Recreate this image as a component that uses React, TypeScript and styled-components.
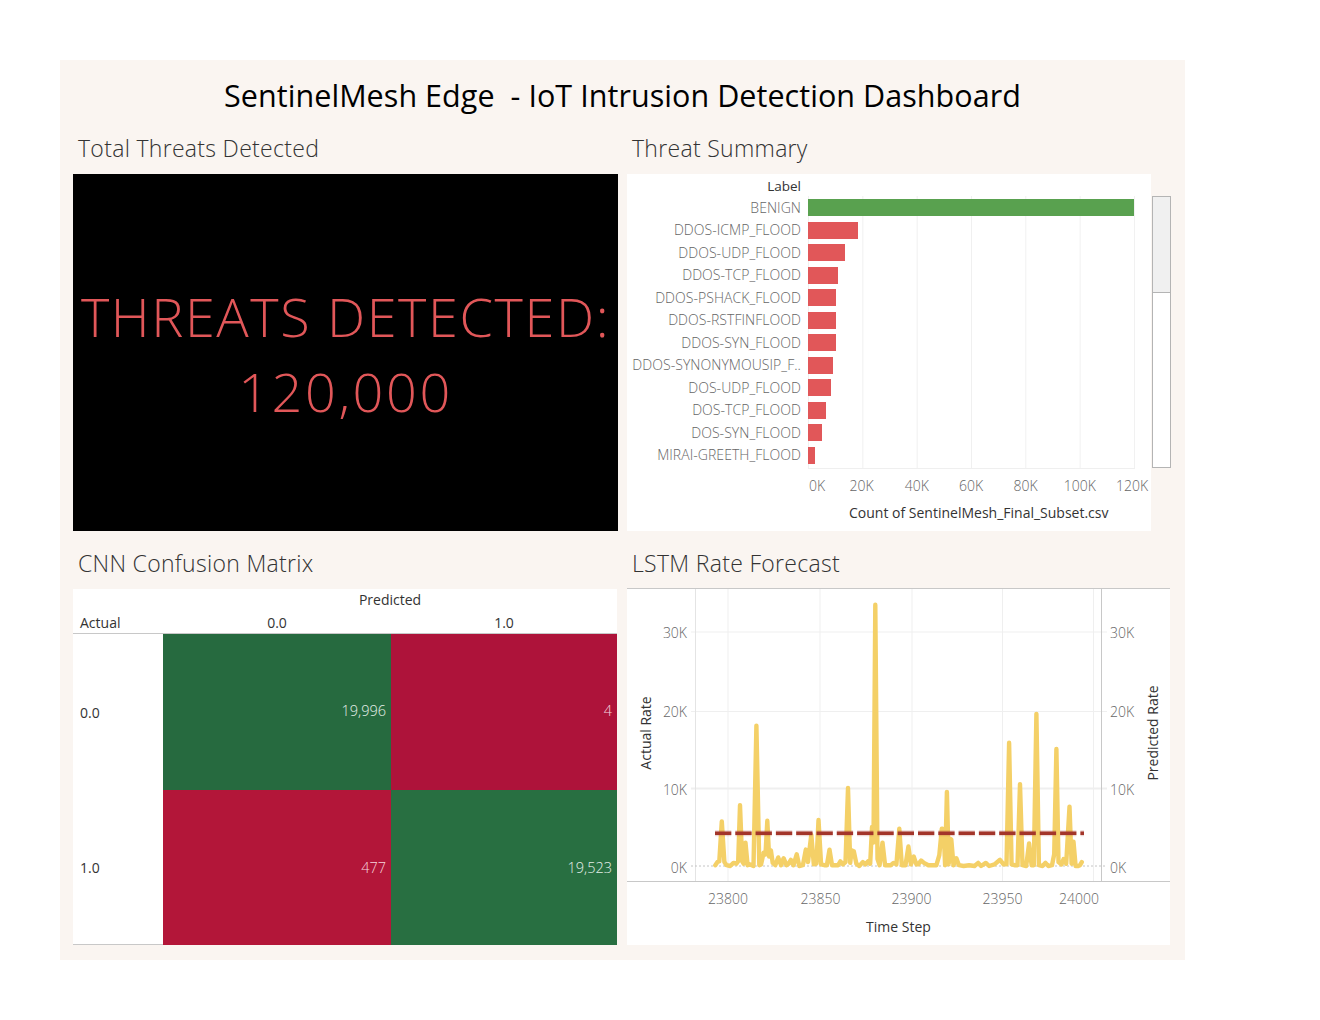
import React from "react";
import styled, { createGlobalStyle } from "styled-components";

const Global = createGlobalStyle`
  html, body { margin: 0; padding: 0; background: #fff; }
  body { font-family: "Open Sans", "Noto Sans", "Liberation Sans", sans-serif; }
`;

const Canvas = styled.div`
  box-sizing: border-box;
  width: 1125px;
  height: 900px;
  margin: 60px 0 0 60px;
  padding: 0 14px 15px 13px;
  background: #faf5f1;
  display: flex;
  flex-direction: column;
`;
const Title = styled.h1`
  height: 71px;
  margin: 0;
  padding: 0 0 0 1px;
  display: flex;
  justify-content: center;
  align-items: flex-start;
  font-size: 30.5px;
  line-height: 71px;
  font-weight: 400;
  color: #000;
  white-space: pre;
  letter-spacing: 0.05px;
`;
const Board = styled.div`
  display: grid;
  grid-template-columns: 545px 544px;
  grid-template-rows: 400px 399px;
  column-gap: 9px;
  row-gap: 15px;
`;
const Section = styled.section`
  display: flex;
  flex-direction: column;
  min-width: 0;
`;
const Heading = styled.h2`
  height: 34px;
  margin: 0 0 9px;
  padding-left: 5px;
  font-size: 23px;
  line-height: 34px;
  font-weight: 300;
  color: #333;
  letter-spacing: 0.3px;
`;
const BigPanel = styled.div`
  height: 357px;
  background: #000;
  color: #e15759;
  font-size: 54px;
  font-weight: 300;
  line-height: 75px;
  text-align: center;
  display: flex;
  flex-direction: column;
  justify-content: center;
  padding-top: 2px;
  box-sizing: border-box;
  white-space: nowrap;
`;
const BigLine = styled.div<{ $spacing: number }>`
  letter-spacing: ${(p) => p.$spacing}px;
`;

/* Threat summary */
const ThreatLayout = styled.div`
  display: flex;
  gap: 1px;
  height: 357px;
`;
const ThreatPanel = styled.div`
  width: 524px;
  background: #fff;
  position: relative;
  display: flex;
  flex-direction: column;
`;
const LabelHead = styled.div`
  height: 22px;
  width: 174px;
  text-align: right;
  font-size: 13.5px;
  line-height: 25px;
  color: #333;
`;
const BarList = styled.div`
  position: relative;
  height: 272px;
  box-sizing: border-box;
  &::before {
    content: "";
    position: absolute;
    left: 181px;
    top: 0;
    width: 327px;
    height: 100%;
    background-image: linear-gradient(to right, #f0f0f0 1px, transparent 1px);
    background-size: 54.33px 100%;
    border-bottom: 1px solid #efefef;
  }
`;
const BarRow = styled.div`
  position: relative;
  height: 22.5px;
  display: grid;
  grid-template-columns: 174px 1fr;
  column-gap: 7px;
  align-items: center;
`;
const BarLabel = styled.span`
  text-align: right;
  font-size: 14px;
  font-weight: 300;
  color: #666;
  white-space: nowrap;
  letter-spacing: 0.05px;
`;
const Bar = styled.div<{ $w: number; $good?: boolean }>`
  width: ${(p) => p.$w}px;
  height: 17px;
  margin-top: 1px;
  background: ${(p) => (p.$good ? "#59a14f" : "#e15759")};
`;
const TickRow = styled.div`
  display: flex;
  margin: 9px 0 0 154px;
  height: 18px;
`;
const Tick = styled.span<{ $nudge?: number }>`
  flex: none;
  width: 54.33px;
  text-align: center;
  font-size: 14px;
  line-height: 18px;
  font-weight: 300;
  color: #666;
  transform: translateX(${(p) => p.$nudge ?? 0}px);
`;
const AxisTitle = styled.div`
  margin: 9px 0 0 222px;
  font-size: 14px;
  line-height: 18px;
  color: #333;
  white-space: nowrap;
`;
const Scroll = styled.div`
  margin-top: 22px;
  width: 19px;
  height: 272px;
  box-sizing: border-box;
  border: 1px solid #b4b4b4;
  background: #fff;
`;
const ScrollThumb = styled.div`
  height: 95px;
  background: #f0f0f0;
  border-bottom: 1px solid #b4b4b4;
`;

/* Confusion matrix */
const Matrix = styled.div`
  width: 544px;
  height: 356px;
  background: #fff;
  display: grid;
  grid-template-columns: 90px 228px 226px;
  grid-template-rows: 22px 23px 156px 155px;
  font-size: 14px;
  color: #333;
`;
const PredictedHead = styled.div`
  grid-column: 2 / 4;
  text-align: center;
  line-height: 22px;
`;
const ColHead = styled.div<{ $left?: boolean }>`
  border-bottom: 1px solid #c8c8c8;
  line-height: 24px;
  text-align: ${(p) => (p.$left ? "left" : "center")};
  padding-left: ${(p) => (p.$left ? "7px" : "0")};
`;
const RowHead = styled.div<{ $last?: boolean }>`
  display: flex;
  align-items: center;
  padding: 0 0 0 7px;
  border-bottom: ${(p) => (p.$last ? "1px solid #c8c8c8" : "0")};
`;
const Cell = styled.div<{ $bg: string; $tint: string; $raise: number }>`
  display: flex;
  align-items: center;
  justify-content: flex-end;
  padding: 0 5px ${(p) => p.$raise}px 0;
  background: ${(p) => p.$bg};
  color: ${(p) => p.$tint};
  font-weight: 300;
  font-size: 14.5px;
`;

/* LSTM */
const Forecast = styled.div`
  width: 543px;
  height: 357px;
  margin-top: -1px;
  background: #fff;
`;
const ForecastSvg = styled.svg`
  display: block;
`;
const TickText = styled.text`
  font-size: 14px;
  font-weight: 300;
  fill: #666;
`;
const AxisText = styled.text`
  font-size: 14px;
  fill: #333;
`;

const rows: [string, number, boolean?][] = [
  ["BENIGN", 326, true],
  ["DDOS-ICMP_FLOOD", 50],
  ["DDOS-UDP_FLOOD", 37],
  ["DDOS-TCP_FLOOD", 30],
  ["DDOS-PSHACK_FLOOD", 28],
  ["DDOS-RSTFINFLOOD", 28],
  ["DDOS-SYN_FLOOD", 28],
  ["DDOS-SYNONYMOUSIP_F..", 25],
  ["DOS-UDP_FLOOD", 23],
  ["DOS-TCP_FLOOD", 18],
  ["DOS-SYN_FLOOD", 14],
  ["MIRAI-GREETH_FLOOD", 7],
];
const ticks: [string, number][] = [
  ["0K", 9],
  ["20K", -1],
  ["40K", 0],
  ["60K", 0],
  ["80K", 0],
  ["100K", 0],
  ["120K", -2],
];

/* [x in 2.75× zoom units, value in thousands] */
const series: [number, number][] = [
  [262, 0.1],[268, 0.5],[273, 0.6],[280, 5.7],[287, 0.5],[293, 0.1],[303, 0.0],[312, 0.4],[320, 0.3],[325, 0.6],
  [330, 7.8],[336, 0.6],[340, 0.3],[345, 3.0],[351, 0.1],[358, 0.2],[367, 0.0],[375, 18],[383, 0.1],[388, 0.2],
  [395, 1.7],[400, 1.5],[405, 5.8],[410, 1.2],[415, 2.0],[420, 0.4],[427, 0.1],[435, 1.1],[443, 0.1],[450, 1.0],
  [458, 0.1],[464, 0.3],[470, 0.8],[477, 0.1],[486, 1.5],[493, 0.0],[503, 0.1],[511, 2.1],[517, 0.5],[526, 4.0],
  [533, 0.2],[540, 0.3],[546, 5.9],[553, 0.2],[562, 0.1],[569, 0.1],[576, 2.1],[583, 0.1],[593, 0.1],[600, 0.1],
  [606, 0.6],[613, 0.2],[620, 0.5],[627, 10],[633, 0.4],[637, 2.0],[643, 1.9],[650, 0.3],[658, 0.0],[668, 0.5],
  [675, 0.2],[682, 0.6],[688, 0.3],[693, 5],[697, 3],[702, 33.5],[708, 0.9],[714, 0.1],[722, 3.0],[729, 0.1],
  [738, 0.1],[745, 0.1],[752, 0.4],[760, 0.2],[768, 4.8],[775, 0.1],[785, 0.1],[793, 2.5],[800, 0.2],[808, 1.2],
  [815, 0.2],[820, 0.2],[828, 0.7],[836, 0.4],[848, 0.1],[860, 0.1],[870, 0.1],[878, 1.4],[885, 4.8],[890, 4.7],
  [894, 0.1],[899, 9.5],[904, 0.2],[907, 3.5],[911, 3.4],[917, 0.1],[925, 1.0],[932, 0.1],[945, 0.0],[960, 0.1],
  [975, 0.0],[985, 0.4],[993, 0.0],[1006, 0.4],[1015, 0.0],[1030, 0.2],[1045, 0.8],[1055, 0.2],[1063, 0.2],[1070, 15.8],
  [1077, 0.2],[1085, 0.1],[1093, 0.1],[1100, 10.5],[1107, 0.1],[1117, 0.0],[1125, 2.9],[1132, 0.1],[1138, 0.1],[1145, 19.5],
  [1152, 0.1],[1162, 0.0],[1170, 0.4],[1178, 0.0],[1188, 0.1],[1194, 1.5],[1200, 15],[1206, 0.5],[1214, 0.2],[1220, 0.9],
  [1227, 0.3],[1236, 7.6],[1242, 0.3],[1247, 3.1],[1253, 0.0],[1260, 0.0],[1265, 0.1],[1270, 0.5],
];
const path = series
  .map(([z, v], i) => `${i ? "L" : "M"}${(620 + z / 2.75).toFixed(1)} ${(866 - v * 7.8).toFixed(1)}`)
  .join(" ");

const hGrid: [string, number, number][] = [
  ["30K", 632, 1],
  ["20K", 711.5, 1],
  ["10K", 788.5, 2],
];
const xTicks: [string, number, number][] = [
  ["23800", 728, 728],
  ["23850", 820, 820.5],
  ["23900", 912, 911.5],
  ["23950", 1002.5, 1002.5],
  ["24000", 1093.5, 1079],
];

function ForecastChart() {
  return (
    <ForecastSvg width={543} height={357} viewBox="627 588 543 357">
      {hGrid.map(([t, y, w]) => (
        <line key={t} x1={691} x2={1107} y1={y} y2={y} stroke="#efefef" strokeWidth={w} />
      ))}
      {xTicks.map(([t, x]) => (
        <line key={t} x1={x} x2={x} y1={589} y2={881} stroke="#efefef" />
      ))}
      <line x1={627} x2={1170} y1={588.5} y2={588.5} stroke="#c8c8c8" />
      <line x1={627} x2={1170} y1={881.5} y2={881.5} stroke="#c8c8c8" />
      <line x1={695.5} x2={695.5} y1={589} y2={881} stroke="#e4e4e4" />
      <line x1={1101.5} x2={1101.5} y1={589} y2={881} stroke="#c8c8c8" />
      <line x1={691} x2={1107} y1={866} y2={866} stroke="#c4c4c4" strokeDasharray="2 2" />
      <path d={path} fill="none" stroke="#f4d067" strokeWidth={4.4} strokeLinejoin="round" strokeLinecap="round" />
      <line x1={715} x2={1084} y1={833.3} y2={833.3} stroke="#a3352a" strokeOpacity={0.2} strokeWidth={6} strokeDasharray="16.3 4" />
      <line x1={715} x2={1084} y1={833.3} y2={833.3} stroke="#a3352a" strokeWidth={3.6} strokeDasharray="16.3 4" />
      {[["30K", 638], ["20K", 716.5], ["10K", 794.5], ["0K", 872.5]].map(([t, y]) => (
        <React.Fragment key={t as string}>
          <TickText x={687} y={y as number} textAnchor="end">{t}</TickText>
          <TickText x={1110} y={y as number}>{t}</TickText>
        </React.Fragment>
      ))}
      {xTicks.map(([t, , x]) => (
        <TickText key={t} x={x} y={904} textAnchor="middle">{t}</TickText>
      ))}
      <AxisText x={898.5} y={932} textAnchor="middle">Time Step</AxisText>
      <AxisText transform="translate(651 733) rotate(-90)" textAnchor="middle">Actual Rate</AxisText>
      <AxisText transform="translate(1158 733) rotate(-90)" textAnchor="middle">Predicted Rate</AxisText>
    </ForecastSvg>
  );
}

export default function App() {
  return (
    <>
      <Global />
      <Canvas>
        <Title>SentinelMesh Edge  - IoT Intrusion Detection Dashboard</Title>
        <Board>
          <Section>
            <Heading>Total Threats Detected</Heading>
            <BigPanel>
              <BigLine $spacing={1.6}>THREATS DETECTED:</BigLine>
              <BigLine $spacing={2.6}>120,000</BigLine>
            </BigPanel>
          </Section>
          <Section>
            <Heading>Threat Summary</Heading>
            <ThreatLayout>
              <ThreatPanel>
                <LabelHead>Label</LabelHead>
                <BarList>
                  {rows.map(([name, w, good]) => (
                    <BarRow key={name}>
                      <BarLabel>{name}</BarLabel>
                      <Bar $w={w} $good={good} />
                    </BarRow>
                  ))}
                </BarList>
                <TickRow>
                  {ticks.map(([t, n]) => (
                    <Tick key={t} $nudge={n}>{t}</Tick>
                  ))}
                </TickRow>
                <AxisTitle>Count of SentinelMesh_Final_Subset.csv</AxisTitle>
              </ThreatPanel>
              <Scroll>
                <ScrollThumb />
              </Scroll>
            </ThreatLayout>
          </Section>
          <Section>
            <Heading>CNN Confusion Matrix</Heading>
            <Matrix>
              <div />
              <PredictedHead>Predicted</PredictedHead>
              <ColHead $left>Actual</ColHead>
              <ColHead>0.0</ColHead>
              <ColHead>1.0</ColHead>
              <RowHead>0.0</RowHead>
              <Cell $bg="#266a3f" $tint="#e4eee8" $raise={3}>19,996</Cell>
              <Cell $bg="#ae133a" $tint="#f5d3dc" $raise={3}>4</Cell>
              <RowHead $last>1.0</RowHead>
              <Cell $bg="#b31639" $tint="#f6d5dd" $raise={1}>477</Cell>
              <Cell $bg="#286f41" $tint="#e4eee8" $raise={1}>19,523</Cell>
            </Matrix>
          </Section>
          <Section>
            <Heading>LSTM Rate Forecast</Heading>
            <Forecast>
              <ForecastChart />
            </Forecast>
          </Section>
        </Board>
      </Canvas>
    </>
  );
}
